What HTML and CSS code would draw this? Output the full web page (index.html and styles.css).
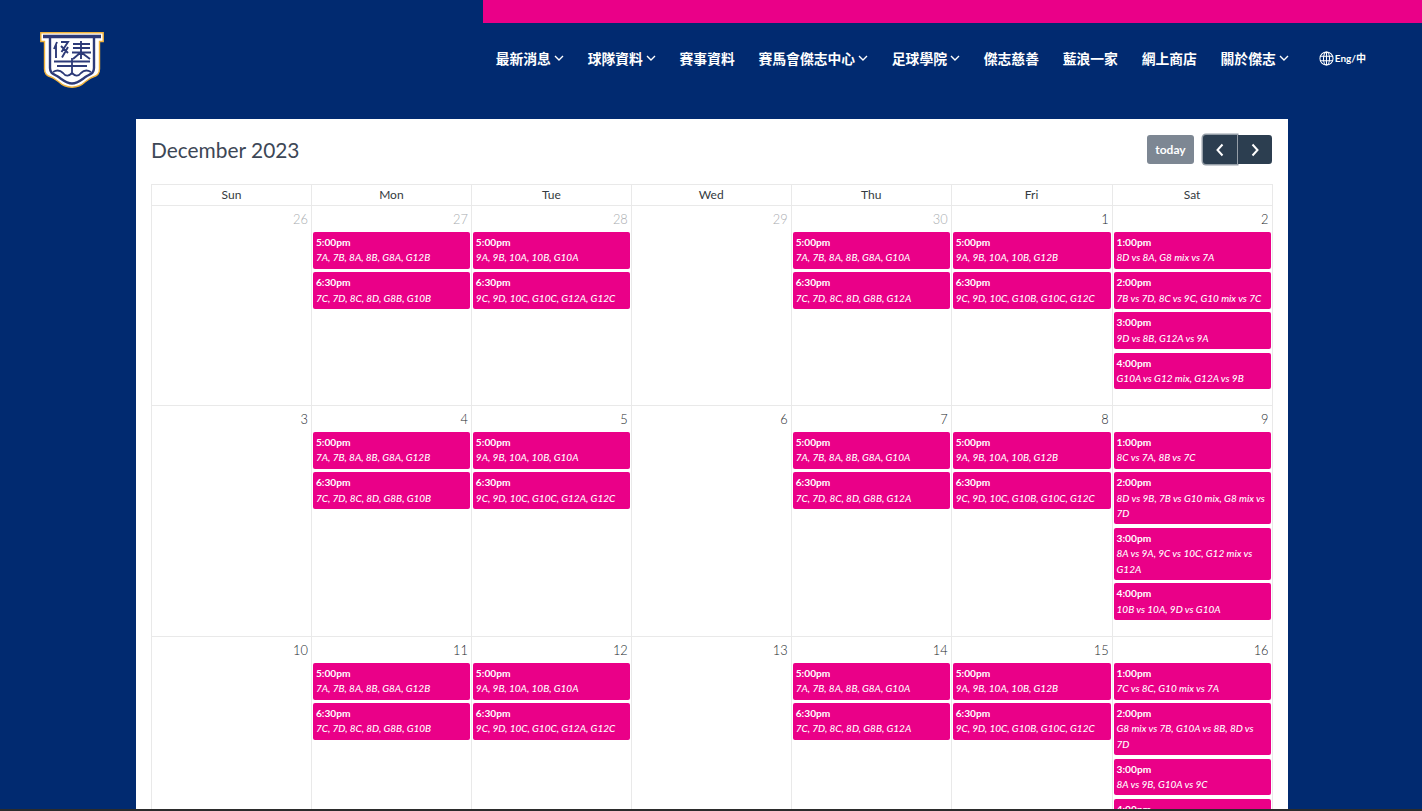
FILE: index.html
```html
<!DOCTYPE html>
<html lang="zh-Hant">
<head>
<meta charset="utf-8">
<title>December 2023</title>
<link rel="stylesheet" href="styles.css">
</head>
<body>
<div class="accent-bar"></div>
<header class="site-header">
  <svg class="logo" viewBox="0 0 64 56" aria-label="Logo">
    <path d="M0.8 0.8H63.2V9.5H59.5V37C59.5 42 57 44 53 45C50 46 48 48 45 50C42 53 38 55 32 55.2C26 55 22 53 19 50C16 48 14 46 11 45C7 44 4.5 42 4.5 37V9.5H0.8Z" fill="#fff" stroke="#f0b23c" stroke-width="1.4"/>
    <g fill="none" stroke="#2d3a78">
      <path stroke-width="3.4" d="M3 4.5H61"/>
      <path stroke-width="2.4" d="M10 6V36C10 41 13 42 17 44C22 47 26 51.5 32 51.5C38 51.5 42 47 47 44C51 42 54 41 54 36V6"/>
      <path stroke-width="1.9" d="M17 10L14 17M16 13V26M21 10H28L21.5 20M21 14L28 21M28 15L22 25.5M33 12H50M33 16H50M32 20.5H51M41 9V27M40 21L33 27M42 21L50 27"/>
      <path stroke-width="1.8" d="M14 29.5H50M17 34H47M32 26V42M13 40C18 37 21 39 23 41C26 45 29 44 32 41C35 44 38 45 41 41C43 39 46 37 51 40"/>
    </g>
  </svg>
  <nav class="main-nav">
    <a class="nav-item">最新消息<svg class="chev" viewBox="0 0 10 6"><path d="M1 1L5 5L9 1"/></svg></a>
    <a class="nav-item">球隊資料<svg class="chev" viewBox="0 0 10 6"><path d="M1 1L5 5L9 1"/></svg></a>
    <a class="nav-item">賽事資料</a>
    <a class="nav-item">賽馬會傑志中心<svg class="chev" viewBox="0 0 10 6"><path d="M1 1L5 5L9 1"/></svg></a>
    <a class="nav-item">足球學院<svg class="chev" viewBox="0 0 10 6"><path d="M1 1L5 5L9 1"/></svg></a>
    <a class="nav-item">傑志慈善</a>
    <a class="nav-item">藍浪一家</a>
    <a class="nav-item">網上商店</a>
    <a class="nav-item">關於傑志<svg class="chev" viewBox="0 0 10 6"><path d="M1 1L5 5L9 1"/></svg></a>
    <a class="lang">
      <svg class="globe" viewBox="0 0 16 16"><circle cx="8" cy="8" r="7"/><ellipse cx="8" cy="8" rx="3.2" ry="7"/><path d="M8 1V15M1 5.6H15M1 10.4H15"/></svg>
      <span>Eng/中</span>
    </a>
  </nav>
</header>

<main class="card">
  <div class="toolbar">
    <h2 class="cal-title">December 2023</h2>
    <div class="cal-controls">
      <button class="btn btn-today">today</button>
      <div class="btn-group">
        <button class="btn btn-nav btn-prev"><svg viewBox="0 0 10 14"><path d="M7.5 1.5L2.5 7L7.5 12.5"/></svg></button>
        <button class="btn btn-nav btn-next"><svg viewBox="0 0 10 14"><path d="M2.5 1.5L7.5 7L2.5 12.5"/></svg></button>
      </div>
    </div>
  </div>

  <div class="calendar">
    <div class="week week-head">
      <div class="dow">Sun</div><div class="dow">Mon</div><div class="dow">Tue</div><div class="dow">Wed</div><div class="dow">Thu</div><div class="dow">Fri</div><div class="dow">Sat</div>
    </div>

    <div class="week">
      <div class="day"><div class="num other">26</div></div>
      <div class="day"><div class="num other">27</div>
        <div class="ev"><b>5:00pm</b><i>7A, 7B, 8A, 8B, G8A, G12B</i></div>
        <div class="ev"><b>6:30pm</b><i>7C, 7D, 8C, 8D, G8B, G10B</i></div></div>
      <div class="day"><div class="num other">28</div>
        <div class="ev"><b>5:00pm</b><i>9A, 9B, 10A, 10B, G10A</i></div>
        <div class="ev"><b>6:30pm</b><i>9C, 9D, 10C, G10C, G12A, G12C</i></div></div>
      <div class="day"><div class="num other">29</div></div>
      <div class="day"><div class="num other">30</div>
        <div class="ev"><b>5:00pm</b><i>7A, 7B, 8A, 8B, G8A, G10A</i></div>
        <div class="ev"><b>6:30pm</b><i>7C, 7D, 8C, 8D, G8B, G12A</i></div></div>
      <div class="day"><div class="num">1</div>
        <div class="ev"><b>5:00pm</b><i>9A, 9B, 10A, 10B, G12B</i></div>
        <div class="ev"><b>6:30pm</b><i>9C, 9D, 10C, G10B, G10C, G12C</i></div></div>
      <div class="day"><div class="num">2</div>
        <div class="ev"><b>1:00pm</b><i>8D vs 8A, G8 mix vs 7A</i></div>
        <div class="ev"><b>2:00pm</b><i>7B vs 7D, 8C vs 9C, G10 mix vs 7C</i></div>
        <div class="ev"><b>3:00pm</b><i>9D vs 8B, G12A vs 9A</i></div>
        <div class="ev"><b>4:00pm</b><i>G10A vs G12 mix, G12A vs 9B</i></div></div>
    </div>

    <div class="week">
      <div class="day"><div class="num">3</div></div>
      <div class="day"><div class="num">4</div>
        <div class="ev"><b>5:00pm</b><i>7A, 7B, 8A, 8B, G8A, G12B</i></div>
        <div class="ev"><b>6:30pm</b><i>7C, 7D, 8C, 8D, G8B, G10B</i></div></div>
      <div class="day"><div class="num">5</div>
        <div class="ev"><b>5:00pm</b><i>9A, 9B, 10A, 10B, G10A</i></div>
        <div class="ev"><b>6:30pm</b><i>9C, 9D, 10C, G10C, G12A, G12C</i></div></div>
      <div class="day"><div class="num">6</div></div>
      <div class="day"><div class="num">7</div>
        <div class="ev"><b>5:00pm</b><i>7A, 7B, 8A, 8B, G8A, G10A</i></div>
        <div class="ev"><b>6:30pm</b><i>7C, 7D, 8C, 8D, G8B, G12A</i></div></div>
      <div class="day"><div class="num">8</div>
        <div class="ev"><b>5:00pm</b><i>9A, 9B, 10A, 10B, G12B</i></div>
        <div class="ev"><b>6:30pm</b><i>9C, 9D, 10C, G10B, G10C, G12C</i></div></div>
      <div class="day"><div class="num">9</div>
        <div class="ev"><b>1:00pm</b><i>8C vs 7A, 8B vs 7C</i></div>
        <div class="ev"><b>2:00pm</b><i>8D vs 9B, 7B vs G10 mix, G8 mix vs 7D</i></div>
        <div class="ev"><b>3:00pm</b><i>8A vs 9A, 9C vs 10C, G12 mix vs G12A</i></div>
        <div class="ev"><b>4:00pm</b><i>10B vs 10A, 9D vs G10A</i></div></div>
    </div>

    <div class="week">
      <div class="day"><div class="num">10</div></div>
      <div class="day"><div class="num">11</div>
        <div class="ev"><b>5:00pm</b><i>7A, 7B, 8A, 8B, G8A, G12B</i></div>
        <div class="ev"><b>6:30pm</b><i>7C, 7D, 8C, 8D, G8B, G10B</i></div></div>
      <div class="day"><div class="num">12</div>
        <div class="ev"><b>5:00pm</b><i>9A, 9B, 10A, 10B, G10A</i></div>
        <div class="ev"><b>6:30pm</b><i>9C, 9D, 10C, G10C, G12A, G12C</i></div></div>
      <div class="day"><div class="num">13</div></div>
      <div class="day"><div class="num">14</div>
        <div class="ev"><b>5:00pm</b><i>7A, 7B, 8A, 8B, G8A, G10A</i></div>
        <div class="ev"><b>6:30pm</b><i>7C, 7D, 8C, 8D, G8B, G12A</i></div></div>
      <div class="day"><div class="num">15</div>
        <div class="ev"><b>5:00pm</b><i>9A, 9B, 10A, 10B, G12B</i></div>
        <div class="ev"><b>6:30pm</b><i>9C, 9D, 10C, G10B, G10C, G12C</i></div></div>
      <div class="day"><div class="num">16</div>
        <div class="ev"><b>1:00pm</b><i>7C vs 8C, G10 mix vs 7A</i></div>
        <div class="ev"><b>2:00pm</b><i>G8 mix vs 7B, G10A vs 8B, 8D vs 7D</i></div>
        <div class="ev"><b>3:00pm</b><i>8A vs 9B, G10A vs 9C</i></div>
        <div class="ev ev-cut"><b>4:00pm</b></div></div>
    </div>
  </div>
</main>
<div class="bottom-edge"></div>
</body>
</html>
```
FILE: styles.css
```css
* { box-sizing: border-box; }
html, body { margin: 0; height: 100%; overflow: hidden; }
body {
  background: #012a70;
  font-family: Lato, "Noto Sans CJK TC", sans-serif;
  color: #212529;
  display: flex;
  flex-direction: column;
  align-items: stretch;
}
.accent-bar {
  flex: none;
  height: 23px;
  margin-left: 483px;
  background: #ea0088;
}
.site-header {
  flex: none;
  height: 96px;
  padding: 9px 56px 0 40px;
  display: flex;
  justify-content: space-between;
  align-items: flex-start;
}
.logo { width: 64px; height: 56px; display: block; }
.main-nav {
  display: flex;
  align-items: center;
  gap: 23.75px;
  padding-top: 15px;
  color: #fff;
}
.nav-item {
  display: flex;
  align-items: center;
  font: 700 13.8px/22px "Noto Sans CJK TC", sans-serif;
  white-space: nowrap;
}
.chev {
  width: 10px;
  height: 6px;
  margin-left: 3px;
  fill: none;
  stroke: #fff;
  stroke-width: 1.4;
}
.lang {
  display: flex;
  align-items: center;
  margin-left: 6.25px;
  font: 700 10px/16px Lato, "Noto Sans CJK TC", sans-serif;
}
.globe {
  width: 15px;
  height: 15px;
  margin-right: 1px;
  fill: none;
  stroke: #fff;
  stroke-width: 1.1;
}
.card {
  flex: none;
  width: 1152px;
  margin-left: 136px;
  padding: 15px;
  background: #fff;
}
.toolbar {
  display: flex;
  justify-content: space-between;
  align-items: flex-start;
  height: 32px;
  margin-bottom: 18px;
}
.cal-title {
  margin: 0;
  font: 400 20.9px/32px Lato, sans-serif;
  color: #3d4756;
}
.cal-controls {
  display: flex;
  align-items: center;
  gap: 9px;
  padding: 1px 1px 0 0;
}
.btn {
  border: 0;
  color: #fff;
  padding: 0;
  height: 29px;
  display: flex;
  align-items: center;
  justify-content: center;
}
.btn-today {
  width: 47px;
  background: #7d8793;
  border-radius: 3px;
  font: 700 12px Lato, sans-serif;
}
.btn-group { display: flex; }
.btn-nav { width: 34px; background: #2c3e50; }
.btn-nav svg { width: 10px; height: 14px; fill: none; stroke: #fff; stroke-width: 2; }
.btn-prev {
  border-radius: 3px 0 0 3px;
  box-shadow: 0 0 0 1.5px rgba(44, 62, 80, .5);
  position: relative;
}
.btn-next { border-radius: 0 3px 3px 0; margin-left: 1px; }
.calendar {
  border-top: 1px solid #e9e9e9;
  border-right: 1px solid #e9e9e9;
  width: 1121.5px;
}
.week {
  display: grid;
  grid-template-columns: repeat(5, 160fr) 161fr 160fr;
  border-bottom: 1px solid #e9e9e9;
}
.dow {
  height: 20px;
  border-left: 1px solid #e9e9e9;
  font-size: 12px;
  line-height: 20px;
  text-align: center;
  color: #343a40;
}
.day {
  border-left: 1px solid #e9e9e9;
  padding: 0 1px 12.2px 1px;
  min-width: 0;
}
.num {
  height: 26px;
  padding: 5px 2px 0 0;
  font-size: 12.8px;
  font-weight: 300;
  line-height: 16px;
  text-align: right;
  color: #24282d;
}
.num.other { color: #a8acb0; }
.ev {
  margin: 0 0 3.4px 0;
  padding: 3px;
  background: #ea0088;
  border-radius: 2px;
  color: #fff;
  font-size: 10px;
  line-height: 15.4px;
}
.ev b, .ev i { display: block; }
.ev b { font-weight: 700; font-size: 10.2px; }
.ev i { font-style: italic; font-weight: 500; }
.ev-cut { min-height: 37px; }
.bottom-edge {
  position: fixed;
  left: 0;
  right: 0;
  bottom: 0;
  height: 2px;
  background: #2b2b2b;
}
```
